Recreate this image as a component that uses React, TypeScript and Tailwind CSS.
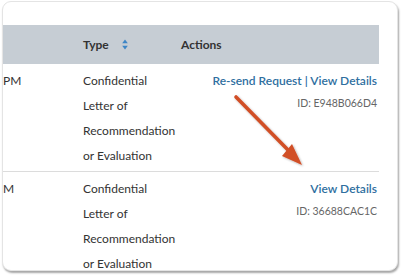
import React from 'react';

type Row = {
  time: string;
  type: string[];
  actions: { label: string; divider?: boolean }[];
  id: string;
};

const rows: Row[] = [
  {
    time: 'PM',
    type: ['Confidential', 'Letter of', 'Recommendation', 'or Evaluation'],
    actions: [{ label: 'Re-send Request' }, { label: 'View Details', divider: true }],
    id: 'ID: E948B066D4',
  },
  {
    time: 'M',
    type: ['Confidential', 'Letter of', 'Recommendation', 'or Evaluation'],
    actions: [{ label: 'View Details' }],
    id: 'ID: 36688CAC1C',
  },
];

function SortIcon() {
  return (
    <svg width="6" height="11" viewBox="0 0 6 11" className="ml-[13px]">
      <path d="M3 0.5 L5.8 4.2 L0.2 4.2 Z" fill="#3d86c6" />
      <path d="M3 10.5 L5.8 6.8 L0.2 6.8 Z" fill="#3d86c6" />
    </svg>
  );
}

function Arrow() {
  return (
    <svg
      width="402"
      height="275"
      viewBox="0 0 402 275"
      className="pointer-events-none absolute left-0 top-0"
    >
      <defs>
        <filter id="sh" x="-20%" y="-20%" width="140%" height="140%">
          <feDropShadow dx="1" dy="1" stdDeviation="1" floodColor="#000" floodOpacity="0.3" />
        </filter>
      </defs>
      <g filter="url(#sh)">
        <line x1="236" y1="97" x2="290" y2="152" stroke="#d14f28" strokeWidth="3.6" strokeLinecap="round" />
        <path d="M302 165 L282 156 L292 144 Z" fill="#d14f28" />
      </g>
    </svg>
  );
}

export default function App() {
  return (
    <div
      className="relative h-[275px] w-[402px] overflow-hidden bg-white"
      style={{ fontFamily: 'Lato, "Open Sans", sans-serif' }}
    >
      <div className="ml-[2px] mt-[1px] h-[270px] w-[396px] overflow-hidden rounded-[9px] border border-[#e4e4e4] bg-white shadow-[1px_2px_2px_rgba(0,0,0,0.35)]">
        <div className="mt-[23px] w-[376px]">
          {/* Header */}
          <div className="flex h-[39px] items-center bg-[#c6cdd4] text-[12px] font-bold text-[#333]">
            <div className="w-[80px]" />
            <div className="flex w-[98px] items-center">
              Type
              <SortIcon />
            </div>
            <div className="flex-1">Actions</div>
          </div>

          {/* Rows */}
          {rows.map((r, i) => (
            <div
              key={i}
              className={`flex pb-[3px] pt-[4px] text-[12px] text-[#333] ${
                i < rows.length - 1 ? 'border-b border-[#dcdcdc]' : ''
              }`}
            >
              <div className="w-[80px] leading-[25px]">{r.time}</div>
              <div className="w-[98px] leading-[25px]">
                {r.type.map((t) => (
                  <div key={t}>{t}</div>
                ))}
              </div>
              <div className="flex-1 pr-[2px] text-right">
                <div className="leading-[25px] font-semibold text-[#2f6f9f]">
                  {r.actions.map((a) => (
                    <span key={a.label}>
                      {a.divider && <span> | </span>}
                      {a.label}
                    </span>
                  ))}
                </div>
                <div className="text-[10.5px] leading-[21px] text-[#666]">{r.id}</div>
              </div>
            </div>
          ))}
        </div>
      </div>
      <Arrow />
    </div>
  );
}
